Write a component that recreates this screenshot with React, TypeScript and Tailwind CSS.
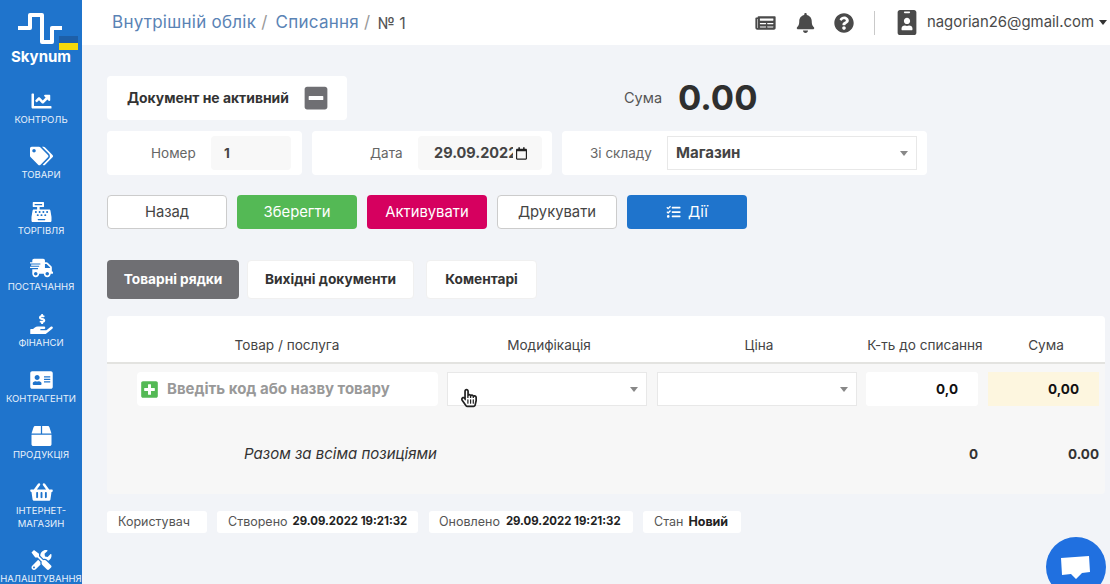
import React from "react";
import {
  FaChartLine, FaTags, FaCashRegister, FaShippingFast, FaHandHoldingUsd, FaAddressCard, FaBox,
  FaShoppingBasket, FaTools, FaBell, FaQuestionCircle, FaIdBadge, FaMinusSquare, FaPlusSquare,
  FaTasks, FaRegCalendar, FaRegHandPointer, FaNewspaper,
} from "react-icons/fa";

const nav: [React.ComponentType<{ className?: string }>, string][] = [
  [FaChartLine, "КОНТРОЛЬ"],
  [FaTags, "ТОВАРИ"],
  [FaCashRegister, "ТОРГІВЛЯ"],
  [FaShippingFast, "ПОСТАЧАННЯ"],
  [FaHandHoldingUsd, "ФІНАНСИ"],
  [FaAddressCard, "КОНТРАГЕНТИ"],
  [FaBox, "ПРОДУКЦІЯ"],
  [FaShoppingBasket, "ІНТЕРНЕТ-МАГАЗИН"],
  [FaTools, "НАЛАШТУВАННЯ"],
];

function Caret() {
  return <span className="w-0 h-0 border-x-[4px] border-x-transparent border-t-[5px] border-t-[#888888]" />;
}

function Btn({ cls, children }: { cls: string; children: React.ReactNode }) {
  return (
    <button className={"w-[120px] h-[34px] rounded-[4px] text-[14.8px] flex items-center justify-center gap-[7px] " + cls}>
      {children}
    </button>
  );
}

export default function App() {
  return (
    <div className="flex w-[1110px] h-[584px] overflow-hidden bg-[#f2f4f8] text-[#333333] relative font-['Inter','Liberation_Sans',sans-serif]">
      <aside className="w-[82px] shrink-0 bg-[#1f74cc] text-white flex flex-col items-center">
        <div className="h-[75.5px] w-full shrink-0 flex flex-col items-center relative">
          <svg width="82" height="33" viewBox="0 0 82 33" className="mt-[13px] shrink-0">
            <path d="M18 15H30V2H42V29H52V15H62" fill="none" stroke="white" strokeWidth="4" strokeLinejoin="round" />
          </svg>
          <span className="text-[15px] leading-[16px] font-bold mt-[3px] text-white">Skynum</span>
          <div className="absolute left-[59px] top-[36px] w-[19px] h-[14px] flex flex-col">
            <div className="h-1/2 bg-[#1d5fa8]" />
            <div className="h-1/2 bg-[#f5d90a]" />
          </div>
        </div>
        {nav.map(([Icon, label], i) => (
          <div key={label} className={"w-[82px] shrink-0 flex flex-col items-center " + (i === 7 ? "h-[68px]" : "h-[55.9px]")}>
            <div className="h-[37px] flex items-end justify-center shrink-0">
              <Icon className="w-[23px] h-[20px] mb-[2px]" />
            </div>
            <span className="text-[9.5px] leading-[13px] text-center text-[#e8f1fb] whitespace-pre-line w-[90px]">
              {label === "ІНТЕРНЕТ-МАГАЗИН" ? "ІНТЕРНЕТ-\nМАГАЗИН" : label}
            </span>
          </div>
        ))}
      </aside>

      <div className="flex-1 min-w-0 flex flex-col">
        <header className="h-[45px] shrink-0 bg-white flex items-center pl-[30px] pr-[3px] text-[17px] tracking-[0.015em]">
          <span className="text-[#5a83b5]">Внутрішній облік</span>
          <span className="text-[#999999] ml-[5px] mr-[8px]">/</span>
          <span className="text-[#5a83b5]">Списання</span>
          <span className="text-[#999999] ml-[5px] mr-[7px]">/</span>
          <span className="text-[#555555] text-[16px] tracking-normal">№ 1</span>
          <div className="ml-auto flex items-center text-[#4a4a4a] tracking-normal">
            <FaNewspaper className="w-[23px] h-[18px]" />
            <FaBell className="w-[19px] h-[20px] ml-[19px]" />
            <FaQuestionCircle className="w-[20px] h-[20px] ml-[19px]" />
            <div className="w-px h-[24px] bg-[#c9c9c9] ml-[20px]" />
            <FaIdBadge className="w-[20px] h-[25px] ml-[22px]" />
            <span className="text-[14.9px] ml-[10px] text-[#4a4a4a]">nagorian26@gmail.com</span>
            <span className="w-0 h-0 ml-[5px] border-x-[4px] border-x-transparent border-t-[5px] border-t-[#333333]" />
          </div>
        </header>

        <main className="flex-1 min-h-0 pl-[25px] pr-[5px] pt-[31px] flex flex-col">
          <div className="flex items-center h-[44px]">
            <div className="w-[240px] h-[44px] bg-white rounded-[4px] flex items-center pl-[20px]">
              <span className="text-[13.9px] font-bold text-[#333333] w-[178px] whitespace-nowrap">Документ не активний</span>
              <FaMinusSquare className="w-[24px] h-[26px] text-[#6f6f73] -ml-[1px]" />
            </div>
            <div className="flex items-center ml-[277px] -mt-[3px]">
              <span className="text-[14.5px] text-[#555555] w-[54px] mt-[3px]">Сума</span>
              <span className="text-[34.6px] leading-[44px] font-bold text-[#2f2f2f]">0.00</span>
            </div>
          </div>

          <div className="flex gap-[10px] mt-[11px]">
            <div className="w-[195px] h-[44px] bg-white rounded-[4px] flex items-center pl-[44px] pr-[10px]">
              <span className="text-[13.5px] text-[#666666] w-[60px]">Номер</span>
              <div className="w-[80px] h-[34px] bg-[#f8f8f8] rounded-[4px] flex items-center pl-[13px] text-[13.5px] font-bold text-[#444444]">1</div>
            </div>
            <div className="w-[240px] h-[44px] bg-white rounded-[4px] flex items-center pl-[58px] pr-[10px]">
              <span className="text-[13.5px] text-[#666666] w-[48px]">Дата</span>
              <div className="w-[124px] h-[34px] bg-[#f8f8f8] rounded-[4px] flex items-center pl-[16px] text-[14.5px] font-bold text-[#444444]">
                <span className="w-[79px] overflow-hidden whitespace-nowrap shrink-0">29.09.2022</span>
                <FaRegCalendar className="w-[11px] h-[13px] text-[#222222] ml-[3px]" />
              </div>
            </div>
            <div className="w-[365px] h-[44px] bg-white rounded-[4px] flex items-center pl-[28px]">
              <span className="text-[13.5px] text-[#666666] w-[77px]">Зі складу</span>
              <div className="w-[250px] h-[34px] bg-white border border-[#e8e8e8] flex items-center justify-between pl-[8px] pr-[8px] text-[15px] font-bold text-[#444444]">
                Магазин
                <Caret />
              </div>
            </div>
          </div>

          <div className="flex gap-[10px] mt-[20px]">
            <Btn cls="bg-white border border-[#cccccc] text-[#444444]">Назад</Btn>
            <Btn cls="bg-[#54b955] text-white">Зберегти</Btn>
            <Btn cls="bg-[#d6005f] text-white">Активувати</Btn>
            <Btn cls="bg-white border border-[#cccccc] text-[#444444]">Друкувати</Btn>
            <Btn cls="bg-[#1f74cc] text-white"><FaTasks className="w-[15px] h-[14px]" />Дії</Btn>
          </div>

          <div className="flex mt-[31px] text-[13.7px] font-bold">
            <div className="w-[132px] h-[39px] bg-[#6f6f73] text-white rounded-[4px] flex items-center justify-center">Товарні рядки</div>
            <div className="w-[167px] h-[39px] ml-[8px] bg-white rounded-[4px] border border-[#f0f0f0] flex items-center justify-center text-[#333333]">Вихідні документи</div>
            <div className="w-[111px] h-[39px] ml-[12px] bg-white rounded-[4px] border border-[#f0f0f0] flex items-center justify-center text-[#333333]">Коментарі</div>
          </div>

          <section className="mt-[17px] w-[998px] h-[178px] bg-[#f7f7f7] rounded-[4px] flex flex-col">
            <div className="h-[48px] shrink-0 bg-white border-b-2 border-[#e3e3e0] rounded-t-[4px] flex items-end pb-[7px] text-[13.6px] text-[#444444] text-center">
              <span className="w-[360px]">Товар / послуга</span>
              <span className="w-[164px]">Модифікація</span>
              <span className="w-[180px] ml-[38px]">Ціна</span>
              <span className="w-[152px] whitespace-nowrap">К-ть до списання</span>
              <span className="w-[90px]">Сума</span>
            </div>
            <div className="flex items-center h-[34px] mt-[8px] shrink-0 pl-[30px]">
              <div className="w-[301px] h-[34px] bg-white rounded-[4px] flex items-center pl-[4px] text-[15px] font-bold text-[#999999]">
                <FaPlusSquare className="w-[17px] h-[19px] text-[#54b955] mr-[9px]" />
                Введіть код або назву товару
              </div>
              <div className="w-[200px] h-[34px] ml-[9px] bg-white border border-[#e8e8e8] flex items-center justify-end pr-[8px] relative">
                <Caret />
                <FaRegHandPointer className="absolute left-[13px] top-[13px] w-[16px] h-[24px] text-[#222222]" />
              </div>
              <div className="w-[200px] h-[34px] ml-[10px] bg-white border border-[#e8e8e8] flex items-center justify-end pr-[8px]">
                <Caret />
              </div>
              <div className="w-[112px] h-[34px] ml-[9px] bg-white rounded-[3px] flex items-center justify-end pr-[20px] text-[13.5px] font-bold text-[#111111]">0,0</div>
              <div className="w-[111px] h-[34px] ml-[10px] bg-[#fdf6df] flex items-center justify-end pr-[20px] text-[13.5px] font-bold text-[#111111]">0,00</div>
            </div>
            <div className="flex items-center mt-[37px] text-[15px] text-[#333333]">
              <span className="italic w-[770px] pl-[137px] shrink-0">Разом за всіма позиціями</span>
              <span className="w-[101px] text-right font-bold text-[13.5px]">0</span>
              <span className="w-[121px] text-right font-bold text-[13.5px]">0.00</span>
            </div>
          </section>

          <footer className="flex mt-[17px] text-[12.5px] h-[22px] text-[#555555]">
            <div className="w-[100px] bg-white rounded-[3px] flex items-center pl-[11px]">Користувач</div>
            <div className="w-[201px] ml-[10px] bg-white rounded-[3px] flex items-center pl-[11px] gap-[5px]">
              Створено<b className="text-[#222222] text-[11.4px]">29.09.2022 19:21:32</b>
            </div>
            <div className="w-[204px] ml-[11px] bg-white rounded-[3px] flex items-center pl-[10px] gap-[6px]">
              Оновлено<b className="text-[#222222] text-[11.4px]">29.09.2022 19:21:32</b>
            </div>
            <div className="w-[98px] ml-[10px] bg-white rounded-[3px] flex items-center pl-[11px] gap-[5px]">
              Стан<b className="text-[#222222]">Новий</b>
            </div>
          </footer>
        </main>
      </div>

      <div className="absolute left-[1046px] top-[537px] w-[60px] h-[60px] rounded-full bg-[#2070e0] flex items-start justify-center">
        <svg width="30" height="24" viewBox="0 0 30 24" className="mt-[19px]">
          <path d="M0 2L28 0L29 16L21 17L15 23L10 18L1 19Z" fill="white" />
        </svg>
      </div>
    </div>
  );
}
